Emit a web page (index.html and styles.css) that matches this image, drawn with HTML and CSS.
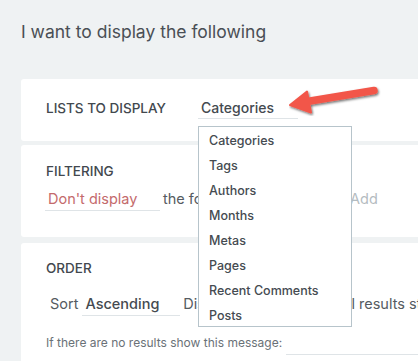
FILE: index.html
```html
<!DOCTYPE html>
<html>
<head>
<meta charset="utf-8">
<link rel="stylesheet" href="styles.css">
</head>
<body>
<div class="page">
  <h1 class="title">I want to display the following</h1>

  <section class="card card-lists">
    <div class="row-lists">
      <span class="label">LISTS TO DISPLAY</span>
      <div class="select-wrap">
        <span class="select">Categories</span>
        <ul class="dropdown">
          <li>Categories</li>
          <li>Tags</li>
          <li>Authors</li>
          <li>Months</li>
          <li>Metas</li>
          <li>Pages</li>
          <li>Recent Comments</li>
          <li>Posts</li>
        </ul>
        <svg class="arrow" width="104" height="32" viewBox="0 0 104 32">
          <defs>
            <filter id="sh" x="-20%" y="-50%" width="140%" height="200%">
              <feDropShadow dx="1" dy="1.5" stdDeviation="1" flood-color="#000" flood-opacity="0.55"/>
            </filter>
          </defs>
          <g filter="url(#sh)">
            <path d="M85 6.5 L15 18" stroke="#f2574a" stroke-width="7.5" stroke-linecap="round" fill="none"/>
            <path d="M1 21 L18 7.5 L22 28.5 Z" fill="#f2574a" stroke="#f2574a" stroke-width="2" stroke-linejoin="round"/>
          </g>
        </svg>
      </div>
    </div>
  </section>

  <section class="card card-filter">
    <h2 class="label heading">FILTERING</h2>
    <div class="row-filter">
      <span class="select select-red">Don't display</span>
      <span class="plain filter-text">the following items:</span>
      <span class="add">Add</span>
    </div>
  </section>

  <section class="card card-order">
    <h2 class="label heading">ORDER</h2>
    <div class="row-order">
      <span class="plain sort">Sort</span>
      <span class="select select-asc">Ascending</span>
      <span class="plain">Display</span>
      <span class="num-input"></span>
      <span class="plain nowrap">total results starting</span>
    </div>
    <div class="row-msg">
      <span class="msg">If there are no results show this message:</span>
      <span class="msg-input"></span>
    </div>
  </section>
</div>
</body>
</html>
```

FILE: styles.css
```css
html, body {
  margin: 0;
  padding: 0;
}
body {
  background: #eff2f3;
  font-family: "Inter", "Noto Sans", sans-serif;
  color: #464c52;
  overflow: hidden;
  width: 418px;
  height: 361px;
}
.page {
  padding-left: 21px;
  width: 440px;
}
.title {
  margin: 0;
  padding-top: 21px;
  height: 79px;
  box-sizing: border-box;
  font-size: 17.5px;
  font-weight: 400;
  line-height: 22px;
  color: #4a4f55;
}
.card {
  background: #fff;
  border-radius: 3px;
  padding-left: 25px;
  box-sizing: border-box;
}
.card-lists {
  height: 62px;
  margin-bottom: 4px;
}
.card-filter {
  height: 92px;
  margin-bottom: 6px;
  padding-top: 17px;
}
.card-order {
  height: 130px;
  padding-top: 16px;
}
.label {
  font-size: 13.5px;
  font-weight: 500;
  color: #42484e;
}
.heading {
  margin: 0;
  line-height: 18px;
}
.row-lists {
  display: flex;
  align-items: center;
  height: 62px;
}
.row-lists .label {
  width: 152px;
  margin-top: -4px;
}
.select-wrap {
  position: relative;
  margin-top: -4px;
}
.select {
  display: inline-block;
  font-size: 14px;
  font-weight: 500;
  color: #444a50;
  border-bottom: 1px solid #dfe4e7;
  line-height: 18px;
  padding: 0 0 1px 3px;
  box-sizing: border-box;
}
.select-wrap .select {
  width: 100px;
}
.dropdown {
  position: absolute;
  left: 0;
  top: 29px;
  width: 154px;
  height: 201px;
  margin: 0;
  padding: 1px 0 0 0;
  box-sizing: border-box;
  list-style: none;
  background: #fff;
  border: 1px solid #b7c4cb;
  z-index: 5;
}
.dropdown li {
  height: 25px;
  line-height: 25px;
  padding-left: 10px;
  font-size: 12.5px;
  font-weight: 500;
  color: #454b51;
}
.arrow {
  position: absolute;
  left: 91px;
  top: -13px;
}
.row-filter {
  display: flex;
  align-items: flex-end;
  margin-top: 10px;
  margin-left: -1px;
}
.select-red {
  width: 115px;
  color: #c46a6c;
  font-weight: 400;
  font-size: 14.5px;
  padding-bottom: 2px;
}
.plain {
  font-size: 14.5px;
  color: #555b61;
  padding-left: 3px;
  line-height: 18px;
  padding-bottom: 3px;
}
.filter-text {
  width: 187px;
  box-sizing: border-box;
  white-space: nowrap;
  overflow: hidden;
}
.add {
  margin-left: 3px;
  font-size: 14.5px;
  color: #b4bcc1;
  line-height: 18px;
  padding-bottom: 3px;
}
.row-order {
  display: flex;
  align-items: flex-end;
  margin-top: 18px;
}
.sort {
  padding-left: 4px;
  padding-right: 4px;
}
.select-asc {
  width: 99px;
  font-size: 14.5px;
  padding-bottom: 2px;
}
.num-input {
  width: 86px;
  margin-left: 4px;
  border-bottom: 1px solid #dfe4e7;
  height: 18px;
}
.nowrap {
  white-space: nowrap;
}
.row-msg {
  display: flex;
  align-items: flex-end;
  margin-top: 20px;
}
.msg {
  font-size: 12px;
  color: #6a7177;
  line-height: 14px;
  padding-bottom: 5px;
}
.msg-input {
  margin-left: 4px;
  width: 160px;
  border-bottom: 1px solid #dfe4e7;
}
```
